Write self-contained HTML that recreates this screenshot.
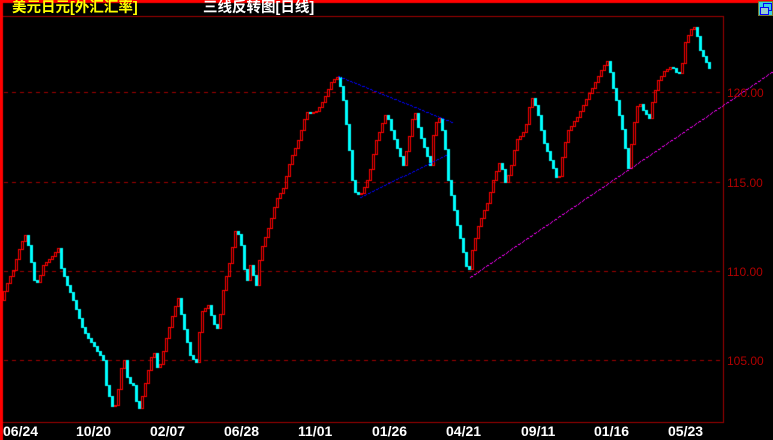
<!DOCTYPE html>
<html><head><meta charset="utf-8"><style>
body{margin:0;background:#000;width:773px;height:440px;overflow:hidden;position:relative;font-family:"Liberation Sans","Noto Sans CJK SC",sans-serif}
canvas{position:absolute;left:0;top:0}
.t{position:absolute;font-size:14.5px;font-weight:bold;top:0;line-height:16px;white-space:nowrap}
.p{position:absolute;left:727px;color:#b00000;font-size:12px;line-height:12px}
.d{position:absolute;top:424px;color:#fff;font-size:14px;font-weight:bold;line-height:15px}
</style></head><body>
<canvas id="c" width="773" height="440"></canvas>
<div class="t" style="left:12px;color:#ffff00">美元日元[外汇汇率]</div>
<div class="t" style="left:203px;color:#fff">三线反转图[日线]</div>
<div class="p" style="top:87px">120.00</div>
<div class="p" style="top:177px">115.00</div>
<div class="p" style="top:266px">110.00</div>
<div class="p" style="top:355px">105.00</div>
<div class="d" style="left:3px">06/24</div>
<div class="d" style="left:76px">10/20</div>
<div class="d" style="left:150px">02/07</div>
<div class="d" style="left:224px">06/28</div>
<div class="d" style="left:298px">11/01</div>
<div class="d" style="left:372px">01/26</div>
<div class="d" style="left:446px">04/21</div>
<div class="d" style="left:521px">09/11</div>
<div class="d" style="left:594px">01/16</div>
<div class="d" style="left:668px">05/23</div>
<div style="position:absolute;left:758px;top:1px;width:13px;height:13px;background:#3ad0e0;border:1px solid #7a7a30"><div style="position:absolute;left:4px;top:1px;width:7px;height:6px;border:1px solid #00f"></div><div style="position:absolute;left:1px;top:5px;width:7px;height:6px;border:1px solid #00f;background:#9cc"></div></div>
<script>
(function(){
var c=document.getElementById('c').getContext('2d');
c.fillStyle='#f00';c.fillRect(0,0,773,3);c.fillRect(0,0,3,440);
c.fillStyle='#a00000';c.fillRect(3,16,720,1);c.fillRect(723,16,1,407);c.fillRect(3,422,721,1);
[92,182,271,360].forEach(function(y){for(var x=4;x<722;x+=8)c.fillRect(x,y,4,1);});
var w=[[3,300],[10,280],[15,270],[22,245],[28,233],[33,262],[35,280],[40,282],[45,265],[52,258],[60,248],[63,268],[68,282],[75,300],[85,330],[95,345],[100,352],[105,360],[108,385],[115,410],[118,402],[125,355],[130,382],[135,385],[140,412],[145,392],[150,370],[155,348],[160,372],[168,338],[175,312],[180,298],[185,325],[192,355],[198,362],[203,312],[210,305],[215,322],[220,330],[225,290],[232,258],[238,226],[243,245],[248,285],[252,265],[258,285],[262,252],[270,228],[278,200],[285,188],[292,160],[300,140],[308,112],[318,112],[325,100],[333,82],[340,76],[345,100],[350,140],[355,190],[362,196],[370,178],[378,140],[388,112],[393,130],[398,145],[405,165],[410,142],[416,108],[421,132],[427,150],[432,165],[436,125],[441,118],[446,138],[450,180],[458,220],[465,252],[470,275],[474,250],[480,226],[490,200],[495,180],[502,160],[507,182],[512,170],[518,140],[527,130],[533,96],[539,110],[545,140],[555,168],[560,183],[565,150],[570,130],[580,115],[590,95],[598,80],[605,66],[610,60],[614,84],[618,100],[625,134],[630,168],[635,128],[640,100],[645,110],[651,118],[655,96],[660,80],[667,70],[673,66],[678,72],[683,73],[686,44],[692,30],[697,26],[702,50],[707,60],[712,70]];
function at(x){for(var i=1;i<w.length;i++){if(x<=w[i][0]){var a=w[i-1],b=w[i];return a[1]+(b[1]-a[1])*(x-a[0])/(b[0]-a[0]);}}return w[w.length-1][1];}
var prev=Math.round(at(3));
for(var x=6;x<=713;x+=3){var y=Math.round(at(x));if(y==prev)y+= (at(x+3)<y?-1:1);
 var t1=Math.min(y,prev),b1=Math.max(y,prev);
 if(y<prev){c.strokeStyle='#f00';c.lineWidth=1;c.strokeRect(x-3+0.5,t1+0.5,2,b1-t1);}
 else{c.fillStyle='#0ff';c.fillRect(x-3,t1,3,b1-t1+1);}
 prev=y;}
function dl(x1,y1,x2,y2,col){c.fillStyle=col;var n=Math.max(Math.abs(x2-x1),Math.abs(y2-y1));for(var i=0;i<=n;i+=1){if(i%4==3)continue;c.fillRect(Math.round(x1+(x2-x1)*i/n),Math.round(y1+(y2-y1)*i/n),1,1);}}
dl(338,76,452,122,'#00f');dl(360,197,446,155,'#00f');dl(470,277,773,71,'#f0f');
})();
</script>
</body></html>
